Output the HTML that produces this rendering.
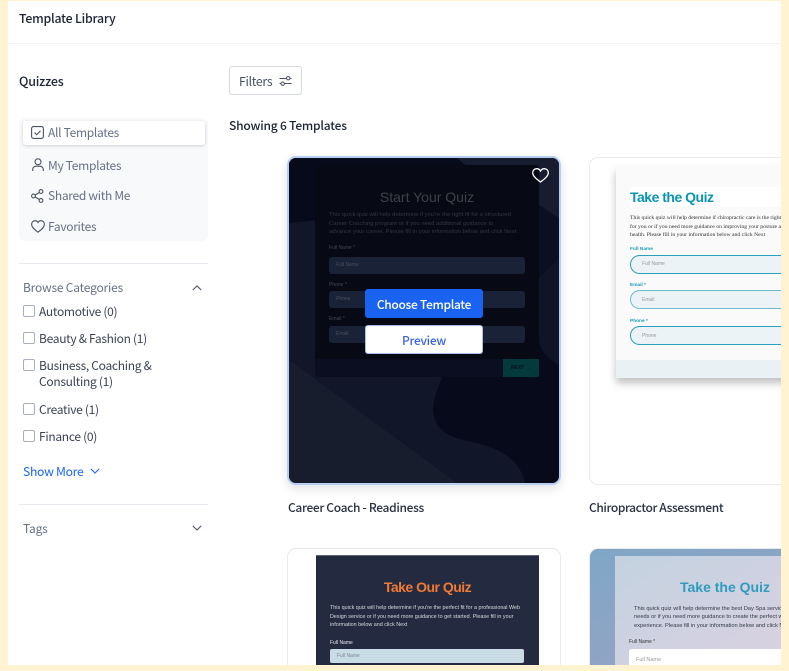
<!DOCTYPE html>
<html><head><meta charset="utf-8"><style>
*{box-sizing:border-box}
html,body{margin:0;padding:0;width:789px;height:671px;overflow:hidden;background:#fff3d1}
body{position:relative;font-family:"Noto Sans CJK JP","Liberation Sans",sans-serif;letter-spacing:-.3px}
#page{position:absolute;left:8px;top:1px;width:773px;height:664px;background:#fff;overflow:hidden}
#page>*,.abs{position:absolute}
.t{position:absolute;white-space:nowrap;line-height:16px}
.card{position:absolute;border-radius:9px;overflow:hidden;background:#fff}
.cb{position:absolute;left:15px;width:12px;height:12px;border:1px solid #a9afbc;border-radius:2px;background:#fff}
.cat{font-size:12px;color:#3b4252;left:31px}
.nav{font-size:12px;color:#667085;left:40px}
svg{position:absolute;overflow:visible}
.card .t{position:absolute;font-family:"Liberation Sans",sans-serif;filter:blur(.3px);letter-spacing:0}
.m{font-weight:500}
</style></head><body>
<div id="page">
<div class="t m" style="left:11px;top:9px;font-size:12.300px;letter-spacing:-.2px;color:#1d2433">Template Library</div>
<div style="left:0;top:42px;width:773px;height:1px;background:#f2f4f7"></div>
<div class="t m" style="left:11px;top:72px;font-size:12.500px;letter-spacing:-.2px;color:#1d2433">Quizzes</div>

<div style="left:221px;top:65px;width:73px;height:29px;border:1px solid #d5d9e2;border-radius:3px;background:#fff"></div>
<div class="t" style="left:231px;top:72px;font-size:12.300px;color:#4a5262">Filters</div>
<svg style="left:271px;top:74px" width="13" height="12" viewBox="0 0 13 12" fill="none" stroke="#4a5262" stroke-width="1"><path d="M0.5 3.500H7.500M11 3.500H12.500M0.500 8.500H2M5.500 8.500H12.500"/><circle cx="9.200" cy="3.200" r="1.700"/><circle cx="3.700" cy="8.700" r="1.700"/></svg>
<div class="t m" style="left:221px;top:117px;font-size:12px;letter-spacing:-.2px;color:#1d2433">Showing 6 Templates</div>

<div style="left:11px;top:117px;width:189px;height:123px;background:#f8f9fb;border-radius:6px"></div>
<div style="left:15px;top:120px;width:182px;height:24px;background:#fff;border-radius:3px;box-shadow:0 1px 3px rgba(16,24,40,.18)"></div>
<svg style="left:23px;top:125px" width="13" height="13" viewBox="0 0 13 13" fill="none" stroke="#4a5262" stroke-width="1.100"><rect x=".6" y=".6" width="11.800" height="11.800" rx="2"/><path d="M3.600 6.600l2.100 2.100 3.800-4"/></svg>
<div class="t nav" style="top:124px">All Templates</div>
<svg style="left:24px;top:157px" width="12" height="14" viewBox="0 0 12 14" fill="none" stroke="#4a5262" stroke-width="1.100"><circle cx="6" cy="3.800" r="3"/><path d="M.7 13v-1.500c0-2 1.600-3.300 3.400-3.300h3.800c1.800 0 3.400 1.300 3.400 3.300V13"/></svg>
<div class="t nav" style="top:157px">My Templates</div>
<svg style="left:23px;top:188px" width="13" height="14" viewBox="0 0 13 14" fill="none" stroke="#4a5262" stroke-width="1.100"><circle cx="2.500" cy="7" r="1.900"/><circle cx="10" cy="2.500" r="1.900"/><circle cx="10" cy="11.500" r="1.900"/><path d="M4.200 6l4.100-2.500M4.200 8l4.100 2.500"/></svg>
<div class="t nav" style="top:187px">Shared with Me</div>
<svg style="left:23px;top:219px" width="14" height="13" viewBox="0 0 14 13" fill="none" stroke="#4a5262" stroke-width="1.100"><path d="M7 12.200C3 9.200.6 7 .6 4.200.6 2.200 2.100.7 4 .7c1.300 0 2.400.7 3 1.800C7.600 1.400 8.700.7 10 .7c1.900 0 3.400 1.500 3.400 3.500C13.400 7 11 9.200 7 12.200z"/></svg>
<div class="t nav" style="top:218px">Favorites</div>

<div style="left:11px;top:262px;width:189px;height:1px;background:#e7e9ef"></div>
<div class="t" style="left:15px;top:279px;font-size:12px;letter-spacing:-.2px;color:#667085">Browse Categories</div>
<svg style="left:184px;top:284px" width="10" height="6" viewBox="0 0 10 6" fill="none" stroke="#4a5262" stroke-width="1.100"><path d="M.8 5L5 .9 9.200 5"/></svg>

<div class="cb" style="top:304px"></div><div class="t cat" style="top:303px">Automotive (0)</div>
<div class="cb" style="top:331px"></div><div class="t cat" style="top:330px">Beauty &amp; Fashion (1)</div>
<div class="cb" style="top:358px"></div><div class="t cat" style="top:357px">Business, Coaching &amp;</div><div class="t cat" style="top:373px">Consulting (1)</div>
<div class="cb" style="top:402px"></div><div class="t cat" style="top:401px">Creative (1)</div>
<div class="cb" style="top:429px"></div><div class="t cat" style="top:428px">Finance (0)</div>
<div class="t" style="left:15px;top:462px;font-size:12.200px;color:#1a66f0">Show More</div>
<svg style="left:82px;top:467px" width="10" height="6" viewBox="0 0 10 6" fill="none" stroke="#1a66f0" stroke-width="1.100"><path d="M.8.900L5 5 9.200.900"/></svg>
<div style="left:11px;top:503px;width:189px;height:1px;background:#e7e9ef"></div>
<div class="t" style="left:15px;top:520px;font-size:12px;letter-spacing:-.2px;color:#667085">Tags</div>
<svg style="left:184px;top:524px" width="10" height="6" viewBox="0 0 10 6" fill="none" stroke="#4a5262" stroke-width="1.100"><path d="M.8.900L5 5 9.200.900"/></svg>

<!-- card 1 -->
<div style="left:279px;top:155px;width:274px;height:329px;border-radius:9px;box-shadow:0 4px 10px rgba(16,24,40,.12)"></div>
<div class="card" style="left:279px;top:155px;width:274px;height:329px;border:2px solid #b9cdf0;background:#111728">
<svg style="left:0;top:0" width="270" height="325" viewBox="0 0 270 325">
<path d="M0 0H168L180 10H30V62L0 65z" fill="#070a1a"/>
<path d="M168 0H270V60L250 47V10H180z" fill="#171d2e"/>
<path d="M250 47L270 60V175C262 165 250 160 250 150z" fill="#0b0f22"/>
<path d="M250 120L270 100V207C258 200 250 192 250 180z" fill="#0f1426"/>
<path d="M0 202L168 325H0z" fill="#181d2e"/>
<path d="M153 219C148 232 144 242 144 252 145 268 154 276 170 281 190 286 228 290 236 325H270V207C258 200 250 192 250 180V219z" fill="#070a1a"/>
</svg>
<div class="abs" style="left:26px;top:7px;width:224px;height:194px;background:#070914;border-radius:3px 3px 0 0"></div>
<div class="abs" style="left:26px;top:201px;width:224px;height:18px;background:#0b0e20;border-radius:0 0 3px 3px"></div>
<div class="abs" style="left:214px;top:201px;width:36px;height:18px;background:#043a3c;border-radius:0 0 3px 0"></div>
<div class="t" style="left:222px;top:202px;font-size:5px;color:#0a0f1c;font-weight:bold">NEXT →</div>
<div class="t" style="left:26px;width:224px;text-align:center;top:31px;font-size:14px;color:#3f4148">Start Your Quiz</div>
<div class="t" style="left:40px;top:53px;font-size:5.900px;line-height:8.500px;color:#34373f">This quick quiz will help determine if you're the right fit for a structured<br>Career Coaching program or if you need additional guidance to<br>advance your career. Please fill in your information below and click Next</div>
<div class="t" style="left:40px;top:82px;font-size:5px;color:#44474f">Full Name *</div>
<div class="abs" style="left:40px;top:99px;width:196px;height:17px;background:#1a2238;border-radius:3px"></div>
<div class="t" style="left:47px;top:99px;font-size:5px;color:#4b5060">Full Name</div>
<div class="t" style="left:40px;top:119px;font-size:5px;color:#44474f">Phone *</div>
<div class="abs" style="left:40px;top:133px;width:196px;height:17px;background:#1a2238;border-radius:3px"></div>
<div class="t" style="left:47px;top:133px;font-size:5px;color:#4b5060">Phone</div>
<div class="t" style="left:40px;top:153px;font-size:5px;color:#44474f">Email *</div>
<div class="abs" style="left:40px;top:168px;width:196px;height:17px;background:#1a2238;border-radius:3px"></div>
<div class="t" style="left:47px;top:168px;font-size:5px;color:#4b5060">Email</div>
<svg style="left:243px;top:10px" width="17" height="15" viewBox="0 0 17 15" fill="none" stroke="#fff" stroke-width="1.300"><path d="M8.500 14C3.500 10.200.7 7.700.7 4.700.7 2.400 2.500.7 4.700.7c1.600 0 3 .9 3.800 2.300C9.300 1.600 10.700.7 12.300.7c2.200 0 4 1.700 4 4 0 3-2.800 5.500-7.800 9.300z"/></svg>
</div>
<div style="left:357px;top:288px;width:118px;height:29px;background:#1a63f0;border-radius:3px"></div>
<div class="t m" style="left:357px;width:118px;text-align:center;top:296px;font-size:12px;color:#fff">Choose Template</div>
<div style="left:357px;top:324px;width:118px;height:29px;background:#fff;border:1px solid #a9bde8;border-radius:3px"></div>
<div class="t m" style="left:357px;width:118px;text-align:center;top:332px;font-size:12px;color:#3a67e0">Preview</div>
<div class="t m" style="left:280px;top:499px;font-size:12px;letter-spacing:-.33px;color:#2a3040">Career Coach - Readiness</div>

<!-- card 2 -->
<div class="card" style="left:581px;top:156px;width:240px;height:328px;border:1px solid #e9ebef">
<div class="abs" style="left:26px;top:7px;width:240px;height:212px;background:#fafafa;box-shadow:0 6px 8px rgba(0,0,0,.25)"></div>
<div class="abs" style="left:26px;top:202px;width:240px;height:18px;background:#e9f1f4"></div>
<div class="abs" style="left:40px;top:29px;width:180px;height:20px;background:#fff"></div>
<div class="t" style="left:40px;top:31px;font-size:14px;letter-spacing:-.5px;font-weight:bold;color:#0b93b4">Take the Quiz</div>
<div class="t" style="left:40px;top:56px;font-size:5.700px;line-height:8.500px;color:#2c3034;font-family:'Liberation Serif',serif">This quick quiz will help determine if chiropractic care is the right fit<br>for you or if you need more guidance on improving your posture and<br>health. Please fill in your information below and click Next</div>
<div class="t" style="left:40px;top:84px;font-size:4.800px;color:#1b9cb8;font-weight:bold">Full Name</div>
<div class="abs" style="left:40px;top:97px;width:200px;height:19px;background:#ebf3f6;border:1px solid #2a9fb9;border-radius:10px 0 0 10px"></div>
<div class="t" style="left:52px;top:98px;font-size:5px;color:#999">Full Name</div>
<div class="t" style="left:40px;top:120px;font-size:4.800px;color:#1b9cb8;font-weight:bold">Email *</div>
<div class="abs" style="left:40px;top:132px;width:200px;height:19px;background:#ebf3f6;border:1px solid #6dbccd;border-radius:10px 0 0 10px"></div>
<div class="t" style="left:52px;top:134px;font-size:5px;color:#999">Email</div>
<div class="t" style="left:40px;top:156px;font-size:4.800px;color:#1b9cb8;font-weight:bold">Phone *</div>
<div class="abs" style="left:40px;top:168px;width:200px;height:19px;background:#ebf3f6;border:1px solid #2a9fb9;border-radius:10px 0 0 10px"></div>
<div class="t" style="left:52px;top:170px;font-size:5px;color:#999">Phone</div>
</div>
<div class="t m" style="left:581px;top:499px;font-size:12px;letter-spacing:-.4px;color:#2a3040">Chiropractor Assessment</div>

<!-- card 3 -->
<div class="card" style="left:279px;top:547px;width:274px;height:130px;border:1px solid #e8eaee">
<div class="abs" style="left:28px;top:6px;width:223px;height:130px;background:#242b40;border-top:1px solid #5c6374"></div>
<div class="t" style="left:28px;width:223px;text-align:center;top:30px;font-size:14px;letter-spacing:-.5px;font-weight:bold;color:#f07a35">Take Our Quiz</div>
<div class="t" style="left:42px;top:55px;font-size:5.400px;line-height:8.700px;color:#d8dae0">This quick quiz will help determine if you're the perfect fit for a professional Web<br>Design service or if you need more guidance to get started. Please fill in your<br>information below and click Next</div>
<div class="t" style="left:42px;top:86px;font-size:5px;color:#e8e8ee">Full Name</div>
<div class="abs" style="left:42px;top:100px;width:194px;height:14px;background:#c9dce6;border-radius:2px"></div>
<div class="t" style="left:49px;top:99px;font-size:5px;color:#7d8794">Full Name</div>
</div>

<!-- card 4 -->
<div class="card" style="left:581px;top:547px;width:240px;height:130px;border:1px solid #e8eaee;background:linear-gradient(160deg,#7fa6c6,#9ea3c4)">
<div class="abs" style="left:25px;top:7px;width:230px;height:130px;background:linear-gradient(150deg,#c3d2e0,#e0d0e2)"></div>
<div class="t" style="left:90px;top:30px;font-size:14px;font-weight:bold;color:#2e9dbd">Take the Quiz</div>
<div class="t" style="left:44px;top:56px;font-size:5.700px;line-height:8.300px;color:#333a44">This quick quiz will help determine the best Day Spa service for your<br>needs or if you need more guidance to create the perfect wellness<br>experience. Please fill in your information below and click Next</div>
<div class="t" style="left:39px;top:85px;font-size:5px;color:#333">Full Name *</div>
<div class="abs" style="left:39px;top:100px;width:200px;height:20px;background:#fff;border-radius:3px"></div>
<div class="t" style="left:46px;top:103px;font-size:5.500px;color:#999">Full Name</div>
</div>
</div>
</body></html>
